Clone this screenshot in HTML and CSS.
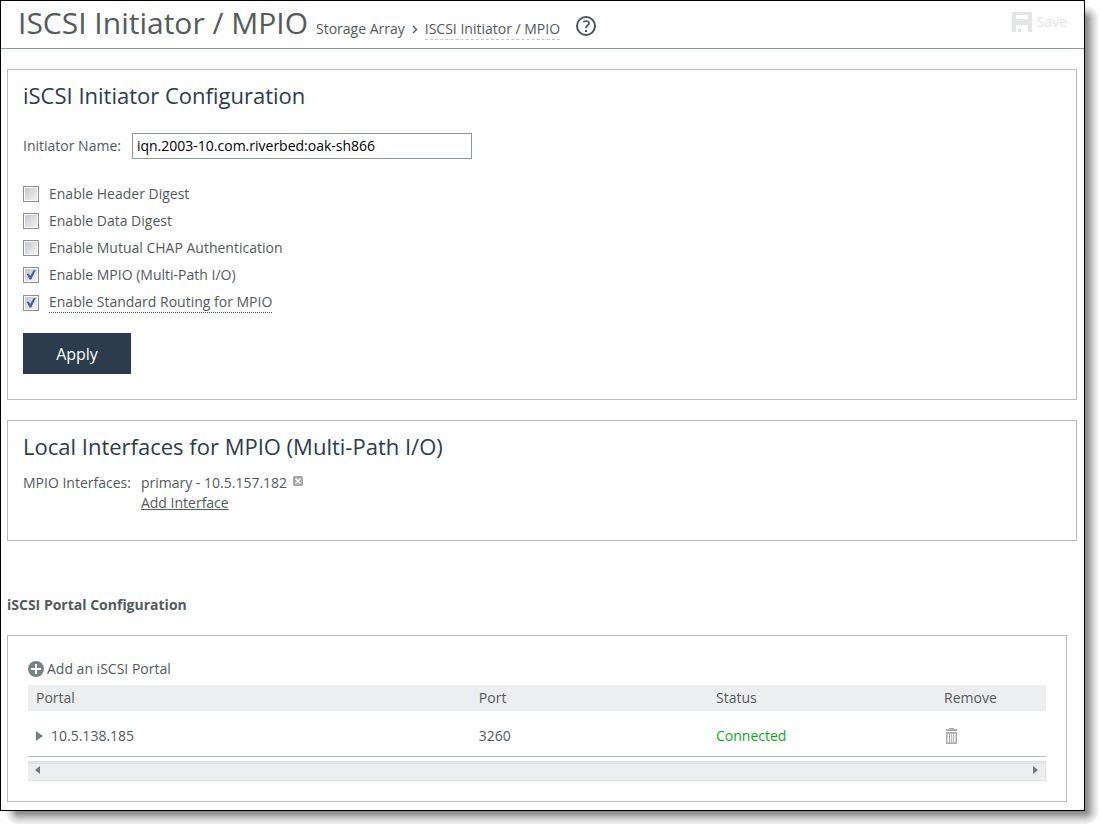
FILE: index.html
```html
<!DOCTYPE html>
<html lang="en">
<head>
    <meta charset="UTF-8">
    <meta name="viewport" content="width=device-width, initial-scale=1.0">
    <title>ISCSI Initiator / MPIO</title>
    <link rel="stylesheet" href="styles.css">
</head>
<body>
    <div class="shadow">
    <div class="window">
        <header class="page-header">
            <h1>ISCSI Initiator / MPIO</h1>
            <nav class="breadcrumb">
                <a href="#">Storage Array</a>
                <svg class="chevron" width="6" height="9" viewBox="0 0 6 9"><path d="M1 1l3.5 3.5L1 8" fill="none" stroke="#545b5c" stroke-width="1.4"/></svg>
                <a href="#" class="current">ISCSI Initiator / MPIO</a>
            </nav>
            <button type="button" class="icon-button help" aria-label="Help">
                <svg width="20" height="20" viewBox="0 0 20 20" fill="none" stroke="#4c5556">
                    <circle cx="10" cy="10" r="9" stroke-width="2"/>
                    <path d="M7.2 6.1c1-.8 2-1.100 3-1.100 1.800 0 2.800.9 2.800 2.200 0 2.300-3 2.300-3 4.700v.4" stroke-width="1.700"/>
                    <path d="M9 14h2v2H9z" fill="#4c5556" stroke="none"/>
                </svg>
            </button>
            <button type="button" class="icon-button save" disabled>
                <svg width="20" height="20" viewBox="0 0 20 20">
                    <path fill="#e4e5e5" fill-rule="evenodd" d="M1 0h18l1 1v19h-4v-7H4v7H0V1zM4 3v4h12V3zM6 17h3v3H6z"/>
                </svg>
                Save
            </button>
        </header>

        <main class="content">
            <section class="panel">
                <h2>iSCSI Initiator Configuration</h2>
                <form>
                    <div class="field">
                        <label for="initiator">Initiator Name:</label>
                        <input type="text" id="initiator" value="iqn.2003-10.com.riverbed:oak-sh866">
                    </div>
                    <div class="options">
                        <label><input type="checkbox"><span>Enable Header Digest</span></label>
                        <label><input type="checkbox"><span>Enable Data Digest</span></label>
                        <label><input type="checkbox"><span>Enable Mutual CHAP Authentication</span></label>
                        <label><input type="checkbox" checked><span>Enable MPIO (Multi-Path I/O)</span></label>
                        <label><input type="checkbox" checked><span class="hint">Enable Standard Routing for MPIO</span></label>
                    </div>
                    <button type="button" class="apply">Apply</button>
                </form>
            </section>

            <section class="panel">
                <h2>Local Interfaces for MPIO (Multi-Path I/O)</h2>
                <div class="interfaces">
                    <span>MPIO Interfaces:</span>
                    <div>
                        <div class="interface">
                            primary - 10.5.157.182
                            <button type="button" class="icon-button" aria-label="Remove interface">
                                <svg width="10" height="10" viewBox="0 0 10 10">
                                    <rect width="10" height="10" rx="1.500" fill="#a5a7a7"/>
                                    <path d="M2.500 2.500l5 5m0-5l-5 5" stroke="#fff" stroke-width="1.500"/>
                                </svg>
                            </button>
                        </div>
                        <a href="#" class="add-interface">Add Interface</a>
                    </div>
                </div>
            </section>

            <h3>iSCSI Portal Configuration</h3>

            <section class="panel portals">
                <button type="button" class="icon-button add-portal">
                    <svg width="16" height="16" viewBox="0 0 16 16">
                        <circle cx="8" cy="8" r="8" fill="#788384"/>
                        <path d="M8 3v10M3 8h10" stroke="#fff" stroke-width="2"/>
                    </svg>
                    Add an iSCSI Portal
                </button>
                <table>
                    <thead>
                        <tr>
                            <th class="col-portal">Portal</th>
                            <th class="col-port">Port</th>
                            <th class="col-status">Status</th>
                            <th>Remove</th>
                        </tr>
                    </thead>
                    <tbody>
                        <tr>
                            <td>
                                <button type="button" class="icon-button expand">
                                    <svg width="7" height="10" viewBox="0 0 7 10"><path d="M0 0l7 5-7 5z" fill="#788384"/></svg>
                                    10.5.138.185
                                </button>
                            </td>
                            <td>3260</td>
                            <td class="connected">Connected</td>
                            <td>
                                <button type="button" class="icon-button trash" aria-label="Remove portal">
                                    <svg width="11" height="16" viewBox="0 0 11 16" fill="#aaacad">
                                        <path d="M3 0h5v1h3v2H0V1h3z"/>
                                        <path fill-rule="evenodd" d="M0 4h11v12H0zM1.500 5.500v9H3v-9zM4.200 5.500v9h1v-9zM6.200 5.500v9h1v-9zM8.200 5.500v9h1.300v-9z"/>
                                    </svg>
                                </button>
                            </td>
                        </tr>
                    </tbody>
                </table>
                <div class="scrollbar">
                    <button type="button" class="icon-button" aria-label="Scroll left">
                        <svg width="5" height="8" viewBox="0 0 5 8"><path d="M5 0v8L0 4z" fill="#777"/></svg>
                    </button>
                    <button type="button" class="icon-button" aria-label="Scroll right">
                        <svg width="5" height="8" viewBox="0 0 5 8"><path d="M0 0v8l5-4z" fill="#777"/></svg>
                    </button>
                </div>
            </section>
        </main>
    </div>
    </div>
</body>
</html>
```
FILE: styles.css
```css
* {
    box-sizing: border-box;
}
body {
    margin: 0;
    background-color: #fff;
    font-family: "Open Sans", "Noto Sans", sans-serif;
    font-size: 14px;
    line-height: 20px;
    color: #545b5c;
}
/* banded shadow: right and bottom edges, then the three corners */
.shadow {
    --bands: #858585 0, #9b9b9b 3px, #bcbcbc 6px, #dadada 9px, #ededed 12px, #efefef 13px;
    padding: 0 16px 16px 0;
    background-image:
        linear-gradient(to right, var(--bands)),
        linear-gradient(to bottom, var(--bands)),
        radial-gradient(circle at left bottom, var(--bands), transparent 13px),
        radial-gradient(circle at left top, var(--bands), transparent 13px),
        radial-gradient(circle at right top, var(--bands), transparent 13px);
    background-position:
        right 3px top 19px,
        left 19px bottom 3px,
        right 3px top 6px,
        right 3px bottom 3px,
        left 6px bottom 3px;
    background-size:
        13px calc(100% - 35px),
        calc(100% - 35px) 13px,
        13px 13px,
        13px 13px,
        13px 13px;
    background-repeat: no-repeat;
}
.window {
    border: 1px solid #000;
    background-color: #fefefe;
}
h1, h2, h3 {
    margin: 0;
}
a {
    color: inherit;
    text-decoration: none;
}
svg {
    display: block;
}
button, input {
    font: inherit;
    color: inherit;
}
.icon-button {
    display: flex;
    align-items: center;
    padding: 0;
    border: none;
    background: none;
    cursor: pointer;
}

/* header */
.page-header {
    display: flex;
    height: 48px;
    padding: 0 17px;
    border-bottom: 1px solid #8d9a98;
}
h1 {
    font-size: 30px;
    font-weight: normal;
    line-height: 44px;
}
.breadcrumb {
    display: flex;
    align-items: center;
    gap: 7px;
    margin-left: 8px;
    padding-top: 9px;
}
.current {
    border-bottom: 1px dashed #c4c7c8;
}
.help {
    margin-left: 16px;
    padding-top: 2px;
}
.save {
    gap: 5px;
    height: 42px;
    margin-left: auto;
    color: #e4e5e5;
}

/* panels */
.content {
    padding: 20px 7px 8px 6px;
}
.panel {
    margin-bottom: 20px;
    padding: 10px 15px 25px;
    border: 1px solid #b9bdc2;
}
h2 {
    font-size: 22px;
    font-weight: normal;
    line-height: 30px;
    color: #2c3c4d;
}
.field {
    display: flex;
    align-items: center;
    gap: 11px;
    margin: 23px 0 21px;
}
.field input {
    width: 340px;
    height: 26px;
    padding: 0 4px 1px;
    border: 1px solid #8d9a98;
    background-color: #fff;
    color: #000;
}
.options label {
    display: flex;
    align-items: center;
    gap: 10px;
    width: max-content;
    height: 27px;
}
.options input {
    appearance: none;
    width: 16px;
    height: 16px;
    margin: 0;
    border: 1px solid #8e8f8f;
    background: linear-gradient(135deg, #c4c7cd, #f3f3f3) content-box #f4f4f4;
    padding: 1px;
}
.options input:checked {
    display: grid;
    place-items: center;
}
.options input:checked::after {
    content: "";
    width: 10px;
    height: 10px;
    background-color: #41609c;
    clip-path: polygon(8% 45%, 27% 40%, 42% 65%, 80% 0, 100% 0, 52% 100%, 35% 100%);
}
.options label:last-child {
    height: 29px;
}
.hint {
    border-bottom: 1px dotted #545b5c;
}
.apply {
    display: block;
    width: 108px;
    height: 41px;
    margin-top: 16px;
    border: none;
    background-color: #2c3c4d;
    color: #fff;
    font-size: 16px;
    cursor: pointer;
}
.interfaces {
    display: flex;
    gap: 10px;
    padding: 12px 0 2px;
}
.interface {
    display: flex;
    gap: 6px;
}
.interface .icon-button {
    height: 16px;
}
.add-interface {
    display: block;
    text-decoration: underline;
}
h3 {
    margin: 54px 0 20px;
    font-size: 14px;
    line-height: 20px;
}

/* portals table */
.portals {
    margin: 0 10px 0 0;
    padding: 23px 20px 20px;
}
.add-portal {
    gap: 3px;
    margin-bottom: 6px;
}
table {
    width: 100%;
    table-layout: fixed;
    border-collapse: collapse;
    text-align: left;
}
th, td {
    padding: 0 8px;
}
th {
    height: 26px;
    background-color: #edeeef;
    font-weight: normal;
}
td {
    height: 45px;
    padding-top: 5px;
    border-bottom: 1px solid #b3bac4;
}
.col-portal {
    width: 43.5%;
}
.col-port {
    width: 23.3%;
}
.col-status {
    width: 22.4%;
}
.connected {
    color: #09ab22;
}
.expand {
    gap: 8px;
}
.trash {
    padding-left: 2px;
}
.scrollbar {
    display: flex;
    justify-content: space-between;
    height: 20px;
    margin-top: 4px;
    padding: 0 7px 3px;
    border: 1px solid #e3e3e3;
    border-top-width: 3px;
    border-left: none;
    background-color: #edeeef;
}
```
